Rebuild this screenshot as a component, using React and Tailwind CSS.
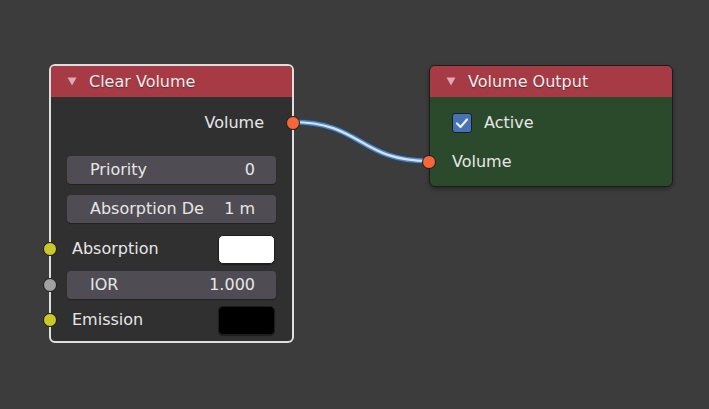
import React from 'react';

const font = { fontFamily: '"DejaVu Sans", "Liberation Sans", sans-serif' };

function Socket({ color, className = '' }) {
  return (
    <span
      className={`absolute top-1/2 -translate-x-1/2 -translate-y-1/2 w-[14px] h-[14px] rounded-full border border-[#1b1b1b] ${className}`}
      style={{ backgroundColor: color }}
    />
  );
}

function Header({ title }) {
  return (
    <div className="h-[31px] bg-[#a63b46] flex items-center pl-[16px] gap-[12px] text-[16px] text-[#ececec] [text-shadow:0_1px_1px_rgba(0,0,0,0.35)]">
      <svg width="10" height="9" viewBox="0 0 10 9">
        <path d="M0.5 0.5 H9.5 L5 8.5 Z" fill="#dcaab0" />
      </svg>
      <span>{title}</span>
    </div>
  );
}

function Field({ label, value }) {
  return (
    <div className="mx-[16px] h-[28px] rounded-[4px] bg-[#504c54] shadow-[0_1px_1px_rgba(0,0,0,0.35)] flex items-center justify-between pl-[23px] pr-[21px]">
      <span>{label}</span>
      <span>{value}</span>
    </div>
  );
}

function ColorRow({ label, color }) {
  return (
    <div className="relative h-[34px] flex items-center justify-between pl-[21px] pr-[17px]">
      <Socket color="#c8c82a" className="left-[-1px]" />
      <span>{label}</span>
      <span
        className="w-[57px] h-[29px] rounded-[5px] border border-[#1e1e1e] shadow-[0_1px_1px_rgba(0,0,0,0.4)]"
        style={{ backgroundColor: color }}
      />
    </div>
  );
}

function ClearVolume() {
  return (
    <div className="absolute left-[49px] top-[64px] w-[245px] h-[279px] rounded-[6px] border-2 border-[#dedede] bg-[#303030] text-[16px] text-[#e6e6e6]">
      <div className="rounded-t-[4px] overflow-hidden">
        <Header title="Clear Volume" />
      </div>
      <div className="flex flex-col">
        <div className="relative mt-[14px] h-[24px] flex items-center justify-end pr-[28px]">
          <span>Volume</span>
          <Socket color="#f5663a" className="left-[242px]" />
        </div>
        <div className="mt-[21px]">
          <Field label="Priority" value="0" />
        </div>
        <div className="mt-[11px]">
          <Field label="Absorption De" value="1 m" />
        </div>
        <div className="mt-[9px]">
          <ColorRow label="Absorption" color="#ffffff" />
        </div>
        <div className="relative mt-[5px]">
          <Socket color="#a1a1a1" className="left-[-1px]" />
          <Field label="IOR" value="1.000" />
        </div>
        <div className="mt-[4px]">
          <ColorRow label="Emission" color="#000000" />
        </div>
      </div>
    </div>
  );
}

function VolumeOutput() {
  return (
    <div className="absolute left-[429px] top-[65px] w-[244px] h-[122px] rounded-[6px] border border-[#1c1c1c] bg-[#2b4a2c] text-[16px] text-[#e6e6e6] shadow-[0_2px_4px_rgba(0,0,0,0.35)]">
      <div className="rounded-t-[5px] overflow-hidden">
        <Header title="Volume Output" />
      </div>
      <div className="flex flex-col">
        <div className="mt-[15px] h-[22px] flex items-center pl-[22px] gap-[12px]">
          <span className="w-[20px] h-[20px] rounded-[3px] bg-[#4772b3] border border-[#1e1e1e] flex items-center justify-center">
            <svg width="14" height="12" viewBox="0 0 14 12">
              <path d="M2 6.5 L5.5 10 L12 2.5" fill="none" stroke="#e8eef5" strokeWidth="2.2" strokeLinecap="round" strokeLinejoin="round" />
            </svg>
          </span>
          <span>Active</span>
        </div>
        <div className="relative mt-[16px] h-[24px] flex items-center pl-[22px]">
          <Socket color="#f5663a" className="left-[-1px]" />
          <span>Volume</span>
        </div>
      </div>
    </div>
  );
}

function Wire() {
  const d = 'M292 122 C 362 122, 359 161, 429 161';
  return (
    <svg className="absolute inset-0" width="709" height="409">
      <path d={d} fill="none" stroke="#24476e" strokeWidth="7" strokeOpacity="0.6" />
      <path d={d} fill="none" stroke="#4d86c2" strokeWidth="5" />
      <path d={d} fill="none" stroke="#d4e2ee" strokeWidth="2.2" />
    </svg>
  );
}

export default function App() {
  return (
    <div className="relative w-[709px] h-[409px] bg-[#3c3c3c] overflow-hidden" style={font}>
      <Wire />
      <ClearVolume />
      <VolumeOutput />
    </div>
  );
}
